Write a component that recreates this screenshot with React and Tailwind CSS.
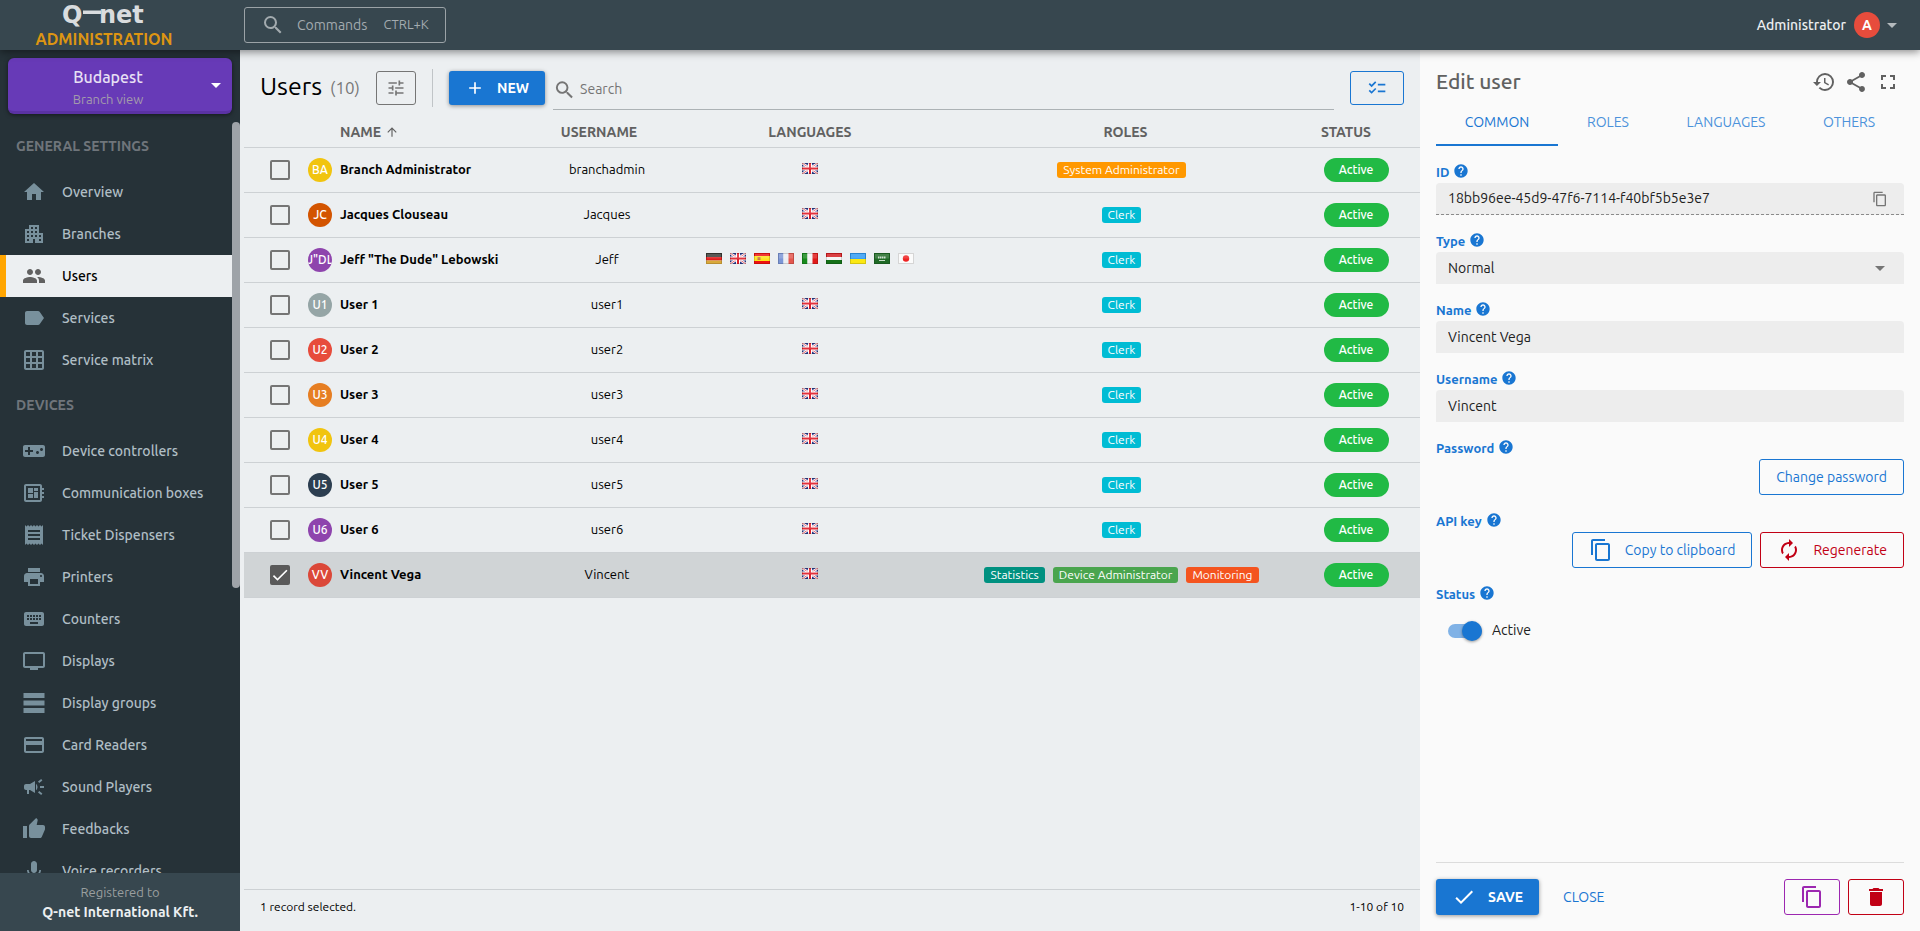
import { useState } from 'react'
import {
  MdAdd,
  MdApartment,
  MdArrowDropDown,
  MdArrowUpward,
  MdAutorenew,
  MdCampaign,
  MdCheck,
  MdChecklist,
  MdContentCopy,
  MdCreditCard,
  MdDelete,
  MdDeveloperBoard,
  MdFullscreen,
  MdGridOn,
  MdHelp,
  MdHistory,
  MdHome,
  MdKeyboard,
  MdLabel,
  MdMic,
  MdPeople,
  MdPrint,
  MdReceipt,
  MdSearch,
  MdShare,
  MdThumbUp,
  MdTune,
  MdTv,
  MdVideogameAsset,
} from 'react-icons/md'

function GroupsIcon({ className }) {
  return (
    <svg className={className} viewBox="0 0 24 24" fill="currentColor">
      <path d="M1.500 2h21v5h-21zM1.500 9.500h21v5h-21zM1.500 17h21v5h-21z" />
    </svg>
  )
}

const menu = [
  {
    title: 'General settings',
    items: [
      { label: 'Overview', icon: MdHome },
      { label: 'Branches', icon: MdApartment },
      { label: 'Users', icon: MdPeople, active: true },
      { label: 'Services', icon: MdLabel },
      { label: 'Service matrix', icon: MdGridOn },
    ],
  },
  {
    title: 'Devices',
    items: [
      { label: 'Device controllers', icon: MdVideogameAsset },
      { label: 'Communication boxes', icon: MdDeveloperBoard },
      { label: 'Ticket Dispensers', icon: MdReceipt },
      { label: 'Printers', icon: MdPrint },
      { label: 'Counters', icon: MdKeyboard },
      { label: 'Displays', icon: MdTv },
      { label: 'Display groups', icon: GroupsIcon },
      { label: 'Card Readers', icon: MdCreditCard },
      { label: 'Sound Players', icon: MdCampaign },
      { label: 'Feedbacks', icon: MdThumbUp },
      { label: 'Voice recorders', icon: MdMic },
    ],
  },
]

const clerk = [{ label: 'Clerk', color: 'bg-[#00bcd4]' }]

const users = [
  { name: 'Branch Administrator', username: 'branchadmin', initials: 'BA', color: 'bg-[#f1c40f]', languages: ['gb'], roles: [{ label: 'System Administrator', color: 'bg-[#ff9800]' }] },
  { name: 'Jacques Clouseau', username: 'Jacques', initials: 'JC', color: 'bg-[#d35400]', languages: ['gb'], roles: clerk },
  { name: 'Jeff "The Dude" Lebowski', username: 'Jeff', initials: 'J"DL', color: 'bg-[#8e44ad]', languages: ['de', 'gb', 'es', 'fr', 'it', 'hu', 'ua', 'sa', 'jp'], roles: clerk },
  { name: 'User 1', username: 'user1', initials: 'U1', color: 'bg-[#95a5a6]', languages: ['gb'], roles: clerk },
  { name: 'User 2', username: 'user2', initials: 'U2', color: 'bg-[#e74c3c]', languages: ['gb'], roles: clerk },
  { name: 'User 3', username: 'user3', initials: 'U3', color: 'bg-[#e67e22]', languages: ['gb'], roles: clerk },
  { name: 'User 4', username: 'user4', initials: 'U4', color: 'bg-[#f1c40f]', languages: ['gb'], roles: clerk },
  { name: 'User 5', username: 'user5', initials: 'U5', color: 'bg-[#2c3e50]', languages: ['gb'], roles: clerk },
  { name: 'User 6', username: 'user6', initials: 'U6', color: 'bg-[#8e44ad]', languages: ['gb'], roles: clerk },
  {
    name: 'Vincent Vega',
    username: 'Vincent',
    initials: 'VV',
    color: 'bg-[#db4839]',
    languages: ['gb'],
    selected: true,
    roles: [
      { label: 'Statistics', color: 'bg-[#009180]' },
      { label: 'Device Administrator', color: 'bg-[#4aa54e]' },
      { label: 'Monitoring', color: 'bg-[#f4541f]' },
    ],
  },
]

function Flag({ code }) {
  return (
    <svg className="h-[11px] w-4" viewBox="0 0 16 11" role="img" aria-label={code}>
      {code === 'gb' && (
        <>
          <path fill="#2b3a8c" d="M0 0h16v11H0z" />
          <path stroke="#fff" strokeWidth="2.4" d="M0 0l16 11M16 0L0 11" />
          <path stroke="#e0525c" strokeWidth=".9" d="M0 0l16 11M16 0L0 11" />
          <path fill="#fff" d="M6 0h4v11H6zM0 3.500h16v4H0z" />
          <path fill="#e0202c" d="M7 0h2v11H7zM0 4.500h16v2H0z" />
        </>
      )}
      {code === 'de' && (
        <>
          <path fill="#3a3a36" d="M0 0h16v4H0z" />
          <path fill="#e01b1b" d="M0 4h16v3.500H0z" />
          <path fill="#d9a93a" d="M0 7.500h16V11H0z" />
        </>
      )}
      {code === 'es' && (
        <>
          <path fill="#ee1111" d="M0 0h16v11H0z" />
          <path fill="#fde21a" d="M0 3h16v5H0z" />
          <path fill="#c8783c" d="M3.500 4h3v3h-3z" />
        </>
      )}
      {code === 'fr' && (
        <>
          <path fill="#7c96d6" d="M0 0h5.500v11H0z" />
          <path fill="#eceef2" d="M5.500 0h5v11h-5z" />
          <path fill="#e4574f" d="M10.500 0H16v11h-5.500z" />
        </>
      )}
      {code === 'it' && (
        <>
          <path fill="#178a1c" d="M0 0h5.500v11H0z" />
          <path fill="#f4f4f4" d="M5.500 0h5v11h-5z" />
          <path fill="#e01a1a" d="M10.500 0H16v11h-5.500z" />
        </>
      )}
      {code === 'hu' && (
        <>
          <path fill="#d31c20" d="M0 0h16v4H0z" />
          <path fill="#f4f4f4" d="M0 4h16v3H0z" />
          <path fill="#157018" d="M0 7h16v4H0z" />
        </>
      )}
      {code === 'ua' && (
        <>
          <path fill="#2f9bf5" d="M0 0h16v6H0z" />
          <path fill="#fbe812" d="M0 6h16v5H0z" />
        </>
      )}
      {code === 'sa' && (
        <>
          <path fill="#1f6a26" d="M0 0h16v11H0z" />
          <path stroke="#c6dcc8" strokeDasharray="1.500 .5" strokeWidth="2" d="M4 4.500h8" />
          <path stroke="#c6dcc8" d="M5 7.500h6" />
        </>
      )}
      {code === 'jp' && (
        <>
          <path fill="#fbfbfb" d="M0 0h16v11H0z" />
          <circle cx="8" cy="5.500" r="3.200" fill="#ee2222" />
        </>
      )}
      <path fill="none" stroke="#000" strokeOpacity=".15" d="M.5.500h15v10H.5z" />
      <path fill="#fff" fillOpacity=".16" d="M1 1h14v4.500H1z" />
    </svg>
  )
}

function Logo() {
  return (
    <svg className="h-7 w-[88px] overflow-visible" viewBox="0 0 88 28" fill="#d9dcde" fontFamily="'DejaVu Sans', sans-serif" fontWeight="700">
      <text x="2" y="22" fontSize="24">Q</text>
      <path d="M23 9.500h18v3.500H23z" />
      <text x="39" y="22" fontSize="24">net</text>
    </svg>
  )
}

function Header() {
  return (
    <header className="relative z-10 flex h-[50px] shrink-0 items-center bg-[#37474f] pr-4 shadow-[0_2px_8px_rgba(0,0,0,0.45)]">
      <a href="#home" className="flex w-60 flex-col items-center pr-8">
        <Logo />
        <span className="text-[16px] leading-5 font-bold text-[#dd9512]">ADMINISTRATION</span>
      </a>
      <button type="button" className="ml-1 flex h-9 items-center rounded-[3px] border border-[#9ba3a7] pr-4 pl-4 text-[#a3abaf]">
        <MdSearch className="size-6" />
        <span className="ml-3 text-[14px]">Commands</span>
        <span className="ml-4 text-[13px]">CTRL+K</span>
      </button>
      <button type="button" className="ml-auto flex items-center text-[14px] font-medium text-[#eceff1]">
        Administrator
        <span className="ml-2 flex size-[26px] items-center justify-center rounded-full bg-[#e74c3c] font-bold text-white">A</span>
        <MdArrowDropDown className="size-6 text-[#b4babd]" />
      </button>
    </header>
  )
}

function Sidebar() {
  return (
    <aside className="flex w-60 shrink-0 flex-col bg-[#263238]">
      <button
        type="button"
        className="mx-2 mt-2 flex h-14 shrink-0 items-center rounded-md border-b-[3px] border-[#5a32a3] bg-[#673ab7] shadow-[0_1px_4px_rgba(0,0,0,0.5)]"
      >
        <span className="flex flex-1 flex-col items-center pt-1 pl-1">
          <span className="text-[16px] leading-6 font-medium text-[#e8e0f4]">Budapest</span>
          <span className="text-[13px] leading-5 text-[#a39bab]">Branch view</span>
        </span>
        <MdArrowDropDown className="mr-1 size-6 text-white" />
      </button>

      <div className="mt-2 flex min-h-0 flex-1">
        <nav className="min-w-0 flex-1 overflow-hidden">
          {menu.map((group) => (
            <div key={group.title}>
              <h2 className="flex h-[49px] items-center pl-4 text-[14px] font-bold text-[#6f757b] uppercase">{group.title}</h2>
              <ul>
                {group.items.map(({ label, icon: Icon, active }) => (
                  <li key={label}>
                    <a
                      href="#menu"
                      className={
                        active
                          ? 'flex h-[42px] items-center border-l-[6px] border-[#ffa500] bg-[#eceff1] pl-4 text-[14px] font-medium text-black'
                          : 'flex h-[42px] items-center border-l-[6px] border-transparent pl-4 text-[14px] font-medium text-[#b0bec5]'
                      }
                    >
                      <Icon className={active ? 'size-6 text-[#616161]' : 'size-6 text-[#78909c]'} />
                      <span className="ml-4">{label}</span>
                    </a>
                  </li>
                ))}
              </ul>
            </div>
          ))}
        </nav>
        <div className="w-2">
          <div className="h-[62%] rounded-full bg-[#9ea3a8]" />
        </div>
      </div>

      <footer className="flex h-[58px] shrink-0 flex-col items-center justify-center bg-[#37474f]">
        <span className="text-[13px] leading-5 text-[#9a9f9f]">Registered to</span>
        <span className="text-[14px] leading-5 font-bold text-[#eceff1]">Q-net International Kft.</span>
      </footer>
    </aside>
  )
}

function Checkbox({ checked, onChange, label }) {
  return (
    <label className="relative mx-auto block size-5">
      <input
        type="checkbox"
        checked={checked}
        onChange={onChange}
        aria-label={label}
        className="block size-5 appearance-none rounded-[2px] border-2 border-[#757575] checked:border-[#5a5a5a] checked:bg-[#5a5a5a]"
      />
      {checked && <MdCheck className="pointer-events-none absolute inset-0 size-5 text-white" />}
    </label>
  )
}

function UserTable() {
  const [selected, setSelected] = useState(users.filter((u) => u.selected).map((u) => u.username))

  const toggle = (username) =>
    setSelected(selected.includes(username) ? selected.filter((u) => u !== username) : [...selected, username])

  return (
    <main className="flex min-w-0 flex-1 flex-col pl-1">
      <div className="flex items-center pt-4 pr-4 pl-4">
        <h1 className="pb-1 text-[25px] leading-9 text-black">Users</h1>
        <span className="ml-2 text-[17px] text-[#777]">(10)</span>
        <button type="button" aria-label="Columns" className="ml-4 flex h-[34px] w-10 items-center justify-center rounded-[3px] border border-[#757575] text-[#757575]">
          <MdTune className="size-5" />
        </button>
        <div className="ml-4 h-[38px] w-px bg-[#c0c4c7]" />
        <button
          type="button"
          className="ml-4 flex h-[34px] items-center rounded-[3px] bg-[#1976d2] pr-4 pl-4 text-[14px] font-bold text-white shadow-[0_1px_4px_rgba(0,0,0,0.4)]"
        >
          <MdAdd className="size-5" />
          <span className="ml-3">NEW</span>
        </button>
        <label className="ml-2 flex h-11 flex-1 items-center border-b border-[#acb2b5] pt-1 text-[#757575]">
          <MdSearch className="size-6" />
          <input type="text" aria-label="Search" placeholder="Search" className="ml-1 w-full text-[14px] outline-none placeholder:text-[#757575]" />
        </label>
        <button type="button" aria-label="Select rows" className="ml-4 flex h-[34px] w-[54px] items-center justify-center rounded-[3px] border border-[#1976d2] text-[#1976d2]">
          <MdChecklist className="size-5" />
        </button>
      </div>

      <table className="mt-2 w-full table-fixed text-[13px] text-black">
        <colgroup>
          <col className="w-[64px]" />
          <col className="w-[32px]" />
          <col />
          <col className="w-[10.5%]" />
          <col className="w-[24%]" />
          <col className="w-[29%]" />
          <col className="w-32" />
        </colgroup>
        <thead>
          <tr className="h-[29px] border-b border-[#cdd1d4] text-[14px] font-bold text-[#616161]">
            <th />
            <th />
            <th className="text-left">
              <span className="flex items-center">
                NAME <MdArrowUpward className="ml-1 size-[14px]" />
              </span>
            </th>
            <th className="pr-4">USERNAME</th>
            <th>LANGUAGES</th>
            <th className="pl-2">ROLES</th>
            <th className="pr-5">STATUS</th>
          </tr>
        </thead>
        <tbody>
          {users.map((user) => {
            const isSelected = selected.includes(user.username)
            return (
              <tr key={user.username} className={isSelected ? 'h-[45px] border-b border-[#cdd1d4] bg-[#d0d4d6]' : 'h-[45px] border-b border-[#cdd1d4]'}>
                <td className="pl-2">
                  <Checkbox checked={isSelected} onChange={() => toggle(user.username)} label={user.name} />
                </td>
                <td>
                  <span className={`flex size-6 items-center justify-center overflow-hidden rounded-full text-[12px] font-medium text-white ${user.color}`}>
                    {user.initials}
                  </span>
                </td>
                <td className="font-bold whitespace-nowrap">{user.name}</td>
                <td className="text-center">{user.username}</td>
                <td className="pb-0.5">
                  <span className="flex justify-center gap-2">
                    {user.languages.map((code) => (
                      <Flag key={code} code={code} />
                    ))}
                  </span>
                </td>
                <td>
                  <span className="flex justify-center gap-2">
                    {user.roles.map((role) => (
                      <span key={role.label} className={`rounded-[3px] px-1.5 text-[12px] leading-4 whitespace-nowrap text-white ${role.color}`}>
                        {role.label}
                      </span>
                    ))}
                  </span>
                </td>
                <td>
                  <span className="mx-auto block h-6 w-[65px] rounded-full bg-[#21ba45] text-center text-[12px] leading-6 font-medium text-white">Active</span>
                </td>
              </tr>
            )
          })}
        </tbody>
      </table>

      <footer className="mt-auto flex h-[42px] items-center justify-between border-t border-[#cdd1d4] pr-4 pb-2 pl-4 text-[12px] text-black">
        <span>{selected.length} record selected.</span>
        <span>1-10 of 10</span>
      </footer>
    </main>
  )
}

function FieldLabel({ htmlFor, children }) {
  return (
    <label htmlFor={htmlFor} className="flex h-5 items-center gap-1 pt-0.5 text-[13px] font-bold text-[#1976d2]">
      {children}
      <MdHelp className="mb-1 size-4" />
    </label>
  )
}

function EditPanel() {
  const [tab, setTab] = useState('Common')
  const [active, setActive] = useState(true)

  return (
    <section className="flex w-[500px] shrink-0 flex-col bg-[#fafafa] px-4">
      <div className="flex h-[52px] items-center pt-3 text-[#616161]">
        <h2 className="text-[21px] font-medium">Edit user</h2>
        <div className="ml-auto flex gap-2 pr-1">
          <button type="button" aria-label="History"><MdHistory className="size-6" /></button>
          <button type="button" aria-label="Share"><MdShare className="size-6" /></button>
          <button type="button" aria-label="Fullscreen"><MdFullscreen className="size-6" /></button>
        </div>
      </div>

      <div role="tablist" className="flex text-[14px]">
        {['Common', 'Roles', 'Languages', 'Others'].map((name) => (
          <button
            key={name}
            type="button"
            role="tab"
            aria-selected={tab === name}
            onClick={() => setTab(name)}
            className={
              tab === name
                ? 'h-11 flex-auto border-b-2 border-[#1976d2] pb-0.5 text-[#1976d2] uppercase'
                : 'h-11 flex-auto border-b-2 border-transparent pb-0.5 text-[#4c92db] uppercase'
            }
          >
            {name}
          </button>
        ))}
      </div>

      <form className="mt-4 flex flex-1 flex-col">
        <FieldLabel htmlFor="user-id">ID</FieldLabel>
        <div className="mt-px flex h-8 items-center rounded-t border-b border-dashed border-[#8a8a8a] bg-[#ededed] pr-4 pl-3">
          <input id="user-id" readOnly value="18bb96ee-45d9-47f6-7114-f40bf5b5e3e7" className="w-full text-[14px] text-[#212121] outline-none" />
          <button type="button" aria-label="Copy ID" className="text-[#757575]"><MdContentCopy className="size-4" /></button>
        </div>

        <div className="mt-4">
          <FieldLabel htmlFor="user-type">Type</FieldLabel>
          <div className="relative mt-px">
            <select id="user-type" className="h-8 w-full appearance-none rounded-t bg-[#ededed] px-3 text-[14px] text-[#212121] outline-none">
              <option>Normal</option>
            </select>
            <MdArrowDropDown className="pointer-events-none absolute top-1 right-3 size-6 text-[#757575]" />
          </div>
        </div>

        <div className="mt-4">
          <FieldLabel htmlFor="user-name">Name</FieldLabel>
          <input id="user-name" defaultValue="Vincent Vega" className="mt-px block h-8 w-full rounded-t bg-[#ededed] px-3 text-[14px] text-[#212121] outline-none" />
        </div>

        <div className="mt-4">
          <FieldLabel htmlFor="user-username">Username</FieldLabel>
          <input id="user-username" defaultValue="Vincent" className="mt-px block h-8 w-full rounded-t bg-[#ededed] px-3 text-[14px] text-[#212121] outline-none" />
        </div>

        <div className="mt-4">
          <FieldLabel htmlFor="user-password">Password</FieldLabel>
          <div className="mt-px flex justify-end">
            <button id="user-password" type="button" className="h-9 rounded-[3px] border border-[#1976d2] px-4 text-[14px] text-[#1976d2]">
              Change password
            </button>
          </div>
        </div>

        <div className="mt-4">
          <FieldLabel htmlFor="user-api-key">API key</FieldLabel>
          <div className="mt-px flex justify-end gap-2">
            <button id="user-api-key" type="button" className="flex h-9 items-center gap-3 rounded-[3px] border border-[#1976d2] px-4 text-[14px] text-[#1976d2]">
              <MdContentCopy className="size-6" />
              Copy to clipboard
            </button>
            <button type="button" className="flex h-9 items-center gap-3 rounded-[3px] border border-[#c10015] px-4 text-[14px] text-[#c10015]">
              <MdAutorenew className="size-6" />
              Regenerate
            </button>
          </div>
        </div>

        <div className="mt-4">
          <FieldLabel htmlFor="user-status">Status</FieldLabel>
          <label className="mt-4 flex items-center gap-2 pl-3 text-[14px] text-[#212121]">
            <span className="relative flex h-5 w-9 items-center">
              <input
                id="user-status"
                type="checkbox"
                checked={active}
                onChange={() => setActive(!active)}
                className="h-[14px] w-[34px] appearance-none rounded-full bg-[#bdbdbd] checked:bg-[#80b2e6]"
              />
              <span
                className={
                  active
                    ? 'pointer-events-none absolute right-0.5 size-5 rounded-full bg-[#1976d2] shadow-[0_1px_3px_rgba(0,0,0,0.4)]'
                    : 'pointer-events-none absolute left-0 size-5 rounded-full bg-white shadow-[0_1px_3px_rgba(0,0,0,0.4)]'
                }
              />
            </span>
            Active
          </label>
        </div>

        <div className="mt-auto flex items-center gap-2 border-t border-[#dcdcdc] py-4">
          <button type="button" className="flex h-9 items-center gap-3 rounded-[3px] bg-[#1976d2] px-4 text-[14px] font-bold text-white shadow-[0_1px_4px_rgba(0,0,0,0.4)]">
            <MdCheck className="size-6" />
            SAVE
          </button>
          <button type="button" className="h-9 px-4 text-[14px] text-[#1976d2]">CLOSE</button>
          <button type="button" aria-label="Duplicate" className="ml-auto flex h-9 w-14 items-center justify-center rounded-[3px] border border-[#9c27b0] text-[#9c27b0]">
            <MdContentCopy className="size-6" />
          </button>
          <button type="button" aria-label="Delete" className="flex h-9 w-14 items-center justify-center rounded-[3px] border border-[#c10015] text-[#c10015]">
            <MdDelete className="size-6" />
          </button>
        </div>
      </form>
    </section>
  )
}

function App() {
  return (
    <div className="flex h-screen flex-col bg-[#eceff1] font-['Ubuntu','Open_Sans',sans-serif]">
      <Header />
      <div className="flex min-h-0 flex-1">
        <Sidebar />
        <UserTable />
        <EditPanel />
      </div>
    </div>
  )
}

export default App
